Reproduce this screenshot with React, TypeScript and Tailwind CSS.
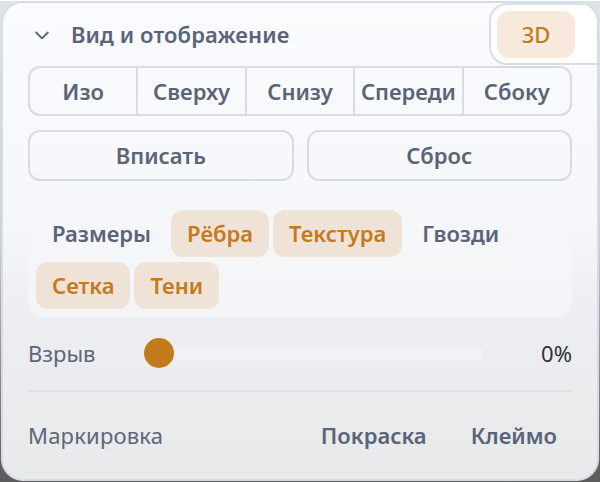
import React, { useState } from "react";

const views = ["Изо", "Сверху", "Снизу", "Спереди", "Сбоку"];

const layers: { label: string; on: boolean }[] = [
  { label: "Размеры", on: false },
  { label: "Рёбра", on: true },
  { label: "Текстура", on: true },
  { label: "Гвозди", on: false },
  { label: "Сетка", on: true },
  { label: "Тени", on: true },
];

export default function App() {
  const [explode] = useState(0);

  return (
    <div
      className="w-[600px] h-[482px] bg-gradient-to-b from-[#dfe3ea] via-[#c9ccd2] to-[#5a5a5a]"
      style={{ fontFamily: '"Noto Sans", "Open Sans", sans-serif' }}
    >
      <div className="relative w-[598px] h-[480px] ml-[1px] mt-[1px] rounded-[22px] border-2 border-[#d6dbe6] bg-[linear-gradient(180deg,#fafbfd_0%,#f6f7fa_45%,#eceef1_65%,#e8e9ea_100%)] overflow-hidden">
        {/* Header */}
        <div className="flex items-center h-[63px] pl-[29px]">
          <svg width="20" height="20" viewBox="0 0 24 24" fill="none" stroke="#5a6478" strokeWidth="2.2" strokeLinecap="round" strokeLinejoin="round">
            <path d="M5 9l7 7 7-7" />
          </svg>
          <span className="ml-[19px] text-[22px] font-semibold text-[#5a6478] tracking-[0.1px]">
            Вид и отображение
          </span>
        </div>

        {/* 3D toggle */}
        <div className="absolute top-[0px] right-[-2px] w-[110px] h-[62px] rounded-tl-[18px] rounded-bl-[18px] border-2 border-[#d9dde7] bg-white flex items-center pl-[6px]">
          <button className="w-[78px] h-[47px] rounded-[12px] bg-[#f7eadc] text-[#c27a1a] text-[22px] font-medium">
            3D
          </button>
        </div>

        <div className="px-[25px]">
          {/* View segments */}
          <div className="flex h-[50px] rounded-[12px] border-2 border-[#d6dbe6] overflow-hidden">
            {views.map((v, i) => (
              <button
                key={v}
                className={
                  "flex-1 text-[22px] font-semibold text-[#5a6478] " +
                  (i > 0 ? "border-l-2 border-[#d6dbe6]" : "")
                }
              >
                {v}
              </button>
            ))}
          </div>

          {/* Fit / Reset */}
          <div className="grid grid-cols-2 gap-[13px] mt-[14px]">
            <button className="h-[51px] rounded-[12px] border-2 border-[#d6dbe6] text-[22px] font-semibold text-[#5a6478]">
              Вписать
            </button>
            <button className="h-[51px] rounded-[12px] border-2 border-[#d6dbe6] text-[22px] font-semibold text-[#5a6478]">
              Сброс
            </button>
          </div>

          {/* Layers */}
          <div className="mt-[21px] h-[115px] rounded-[16px] bg-[#f5f6f9]/80 px-[8px] pt-[8px] flex flex-wrap content-start gap-x-[4px] gap-y-[5px]">
            {layers.map((l) => (
              <button
                key={l.label}
                className={
                  "h-[47px] px-[16px] rounded-[12px] text-[22px] font-semibold " +
                  (l.on
                    ? "bg-[#efe3d7] text-[#c57a1c]"
                    : "bg-transparent text-[#5a6478]")
                }
              >
                {l.label}
              </button>
            ))}
          </div>

          {/* Explode slider */}
          <div className="flex items-center mt-[20px] h-[32px]">
            <span className="w-[131px] text-[22px] text-[#5f6679]">Взрыв</span>
            <div className="relative w-[324px] h-[12px] rounded-full bg-[#f0f2f7]">
              <div
                className="absolute top-1/2 w-[30px] h-[30px] -translate-x-[15px] -translate-y-1/2 rounded-full bg-[#c27a1a]"
                style={{ left: `${explode}%` }}
              />
            </div>
            <span className="ml-auto text-[22px] text-[#2f3137]">{explode}%</span>
          </div>

          <div className="mt-[21px] h-[2px] bg-[#dcdfe8]" />

          {/* Marking */}
          <div className="flex items-center h-[88px] -mt-[1px]">
            <span className="text-[22px] text-[#5f6679] tracking-[0.2px]">Маркировка</span>
            <button className="ml-auto text-[22px] font-semibold text-[#5a6478]">Покраска</button>
            <button className="ml-[44px] mr-[15px] text-[22px] font-semibold text-[#5a6478]">Клеймо</button>
          </div>
        </div>
      </div>
    </div>
  );
}
